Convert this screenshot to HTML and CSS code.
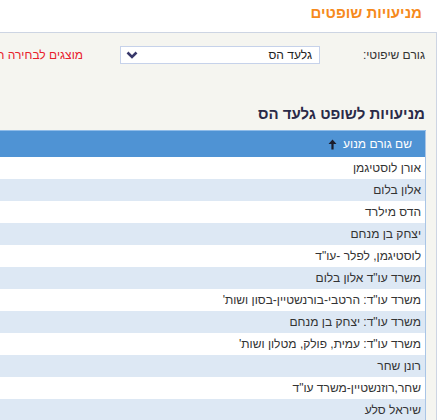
FILE: index.html
```html
<!DOCTYPE html>
<html dir="rtl" lang="he">
<head>
  <meta charset="utf-8">
  <title>מניעויות שופטים</title>
  <link rel="stylesheet" href="styles.css">
</head>
<body>
  <div class="page-title">מניעויות שופטים</div>

  <div class="panel">
    <div class="filter-row">
      <label class="filter-label">גורם שיפוטי:</label>
      <div class="select-box">
        <span class="select-value">גלעד הס</span>
        <svg class="select-arrow" width="12" height="8" viewBox="0 0 12 8">
          <path d="M1.5 1.5 L6 6 L10.5 1.5" fill="none" stroke="#38386a" stroke-width="2.6"/>
        </svg>
      </div>
      <span class="filter-note">מוצגים לבחירה רק גורמים שיפוטיים שיש להם מניעויות</span>
    </div>

    <h2 class="section-title">מניעויות לשופט גלעד הס</h2>

    <table class="grid">
      <thead>
        <tr>
          <th>
            <span class="th-inner">
              שם גורם מנוע
              <svg class="sort-arrow" width="9" height="11" viewBox="0 0 9 11">
                <path d="M4.5 0.5 L8.5 5 L5.6 5 L5.6 10.5 L3.4 10.5 L3.4 5 L0.5 5 Z" fill="#1c1c2a"/>
              </svg>
            </span>
          </th>
        </tr>
      </thead>
      <tbody>
        <tr><td>אורן לוסטיגמן</td></tr>
        <tr><td>אלון בלום</td></tr>
        <tr><td>הדס מילרד</td></tr>
        <tr><td>יצחק בן מנחם</td></tr>
        <tr><td>לוסטיגמן, לפלר -עו"ד</td></tr>
        <tr><td>משרד עו"ד אלון בלום</td></tr>
        <tr><td>משרד עו"ד: הרטבי-בורנשטיין-בסון ושות'</td></tr>
        <tr><td>משרד עו"ד: יצחק בן מנחם</td></tr>
        <tr><td>משרד עו"ד: עמית, פולק, מטלון ושות'</td></tr>
        <tr><td>רונן שחר</td></tr>
        <tr><td>שחר,רוזנשטיין-משרד עו"ד</td></tr>
        <tr><td>שיראל סלע</td></tr>
      </tbody>
    </table>
  </div>
</body>
</html>
```

FILE: styles.css
```css
html, body {
  margin: 0;
  padding: 0;
  background: #fff;
  overflow: hidden;
}

body {
  font-family: "Liberation Sans", Arial, sans-serif;
  font-size: 12px;
  color: #333;
}

.page-title {
  height: 32px;
  line-height: 26px;
  padding-right: 22px;
  font-size: 15px;
  font-weight: bold;
  color: #f68a1c;
}

.panel {
  width: 800px;
  margin-right: 7px;
  padding: 13px 10px 0 0;
  background: #f5f5f0;
  border-top: 1px solid #cdd5e3;
  border-right: 1px solid #cdd5e3;
}

.filter-row {
  display: flex;
  align-items: center;
  height: 18px;
}

.filter-label {
  width: 105px;
  padding-right: 1px;
  color: #333;
}

.select-box {
  display: flex;
  align-items: center;
  justify-content: space-between;
  box-sizing: border-box;
  width: 200px;
  height: 18px;
  padding: 0 7px 0 5px;
  background: #fff;
  border: 1px solid #c6d2ea;
}

.select-value {
  color: #222;
}

.filter-note {
  margin-right: 37px;
  color: #e8202c;
  white-space: nowrap;
}

.section-title {
  margin: 40px 0 6px;
  padding-right: 1px;
  line-height: 20px;
  font-size: 15px;
  font-weight: bold;
  color: #2a2a48;
}

.grid {
  width: 790px;
  border-collapse: collapse;
  border-right: 1px solid #a9c5e6;
  background: #fff;
}

.grid th {
  height: 26px;
  padding: 0 13px 0 0;
  text-align: right;
  font-weight: normal;
  color: #fff;
  background: #4f93d4;
  border-top: 1px solid #8fbce9;
}

.th-inner {
  display: inline-flex;
  align-items: center;
  gap: 6px;
}

.grid td {
  height: 22px;
  padding: 0 4px 0 0;
  line-height: 22px;
}

.grid tbody tr:nth-child(even) td {
  background: #dde8f4;
}
```
